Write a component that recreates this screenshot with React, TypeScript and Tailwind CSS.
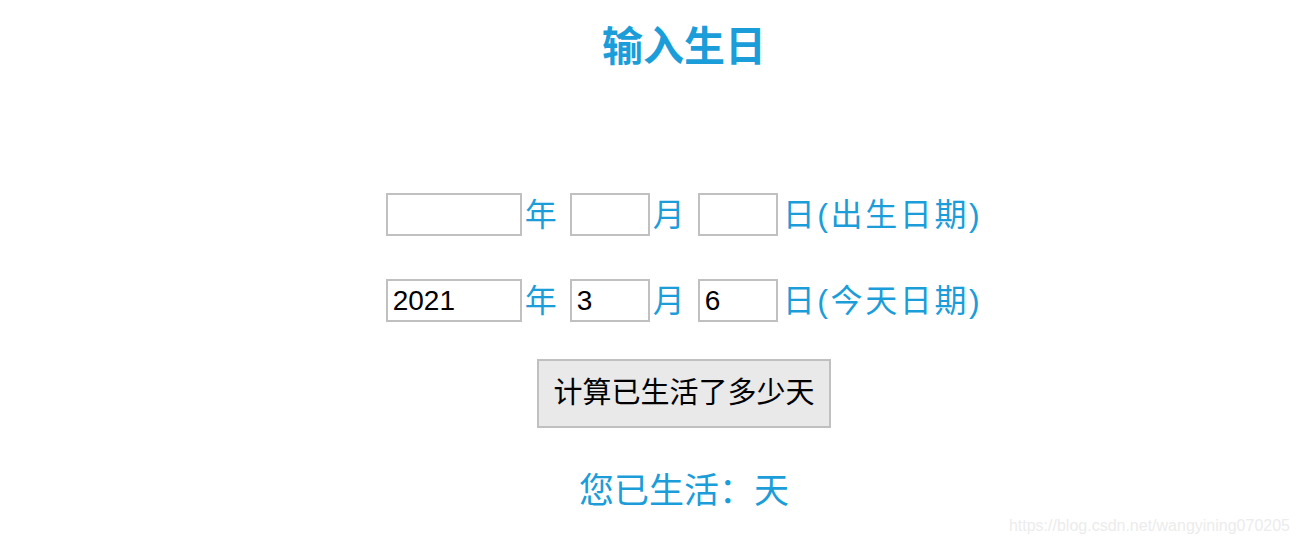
import { useState } from "react"

const blue = "text-[#1b9dd9]"
const font = { fontFamily: '"Liberation Sans", "Noto Sans CJK SC", sans-serif' }
const cjk = { fontFamily: '"Noto Sans CJK SC", "Liberation Sans", sans-serif' }

function DateRow({ y, m, d, label }: { y: string; m: string; d: string; label: string }) {
  const input = "h-[43px] border-2 border-[#c0c0c0] bg-white px-[5px] text-[28px] text-black outline-none"
  const unit = `ml-[3px] mr-[13px] text-[32px] leading-none ${blue}`
  return (
    <div className="flex items-center">
      <input className={`${input} w-[136px]`} defaultValue={y} />
      <span className={unit}>年</span>
      <input className={`${input} w-[80px]`} defaultValue={m} />
      <span className={unit}>月</span>
      <input className={`${input} w-[80px]`} defaultValue={d} />
      <span className={`ml-[5px] text-[32px] leading-none tracking-[2.6px] ${blue}`}>{label}</span>
    </div>
  )
}

export default function App() {
  const [days] = useState("")
  return (
    <div className="relative h-[546px] w-[1302px] overflow-hidden bg-white" style={font}>
      <div className="flex w-[1368px] flex-col items-center">
        <h1 className={`mt-[27px] text-[41px] font-bold leading-none ${blue}`}>输入生日</h1>
        <div className="mt-[125px]">
          <DateRow y="" m="" d="" label="日(出生日期)" />
        </div>
        <div className="mt-[43px]">
          <DateRow y="2021" m="3" d="6" label="日(今天日期)" />
        </div>
        <button className="mt-[37px] h-[69px] w-[294px] border-2 border-[#c0c0c0] bg-[#e9e9e9] text-[29px] text-black">
          计算已生活了多少天
        </button>
        <p className={`mt-[42px] text-[35px] leading-none ${blue}`} style={cjk}>
          您已生活：{days}天
        </p>
      </div>
      <span className="absolute bottom-[8px] right-[12px] text-[16px] text-[#ececec]">
        https://blog.csdn.net/wangyining070205
      </span>
    </div>
  )
}
